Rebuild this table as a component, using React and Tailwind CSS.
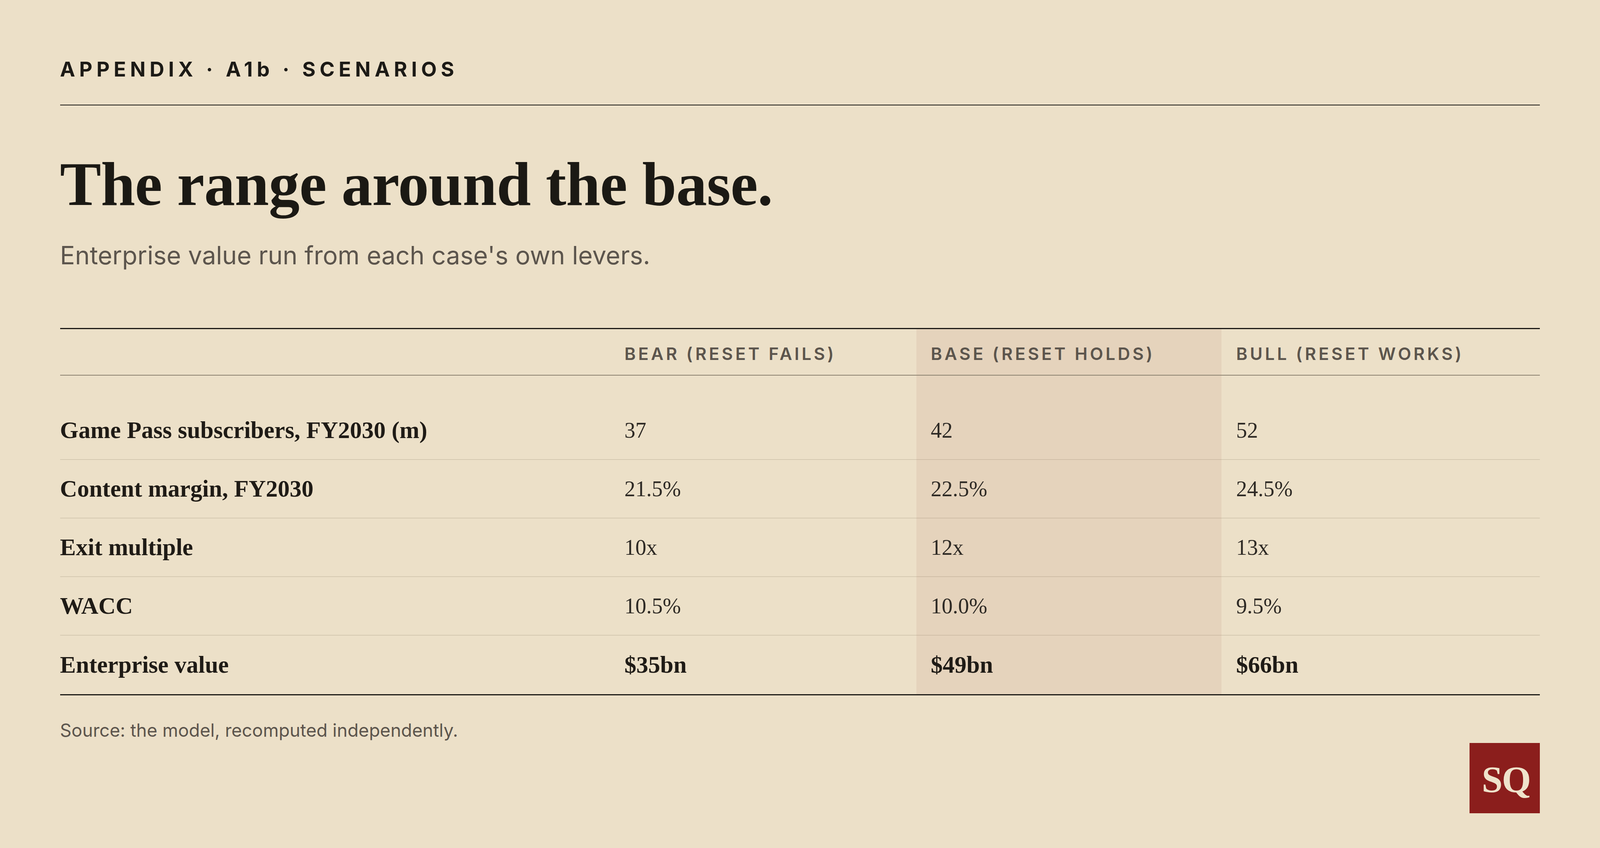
import React from "react";

const serif = "font-['Liberation_Serif','Times_New_Roman',serif]";
const sans = "font-['Inter','Liberation_Sans',sans-serif]";

const rows = [
  { label: "Game Pass subscribers, FY2030 (m)", v: ["37", "42", "52"] },
  { label: "Content margin, FY2030", v: ["21.5%", "22.5%", "24.5%"] },
  { label: "Exit multiple", v: ["10x", "12x", "13x"] },
  { label: "WACC", v: ["10.5%", "10.0%", "9.5%"] },
  { label: "Enterprise value", v: ["$35bn", "$49bn", "$66bn"], total: true },
];

const grid = "grid grid-cols-[1650fr_919fr_916fr_955fr]";

export default function App() {
  return (
    <div className="min-h-[2172px] w-full bg-[#ece0c8] px-[3.75vw] pt-[147px] text-[#1c1a16]">
      <div className={`${sans} border-b-2 border-[#1c1a16] pb-[59px] text-[52px] font-bold uppercase leading-[62px] tracking-[0.2em] text-[#1c1a16]`}>
        APPENDIX · A1<span className="normal-case">b</span> · SCENARIOS
      </div>

      <h1 className={`${serif} mt-[127px] text-[158px] font-bold leading-[150px] tracking-[-0.005em] text-[#1b1914]`}>
        The range around the base.
      </h1>

      <p className={`${sans} mt-[71px] text-[64px] leading-[72px] text-[#5c554d]`}>
        Enterprise value run from each case's own levers.
      </p>

      <div className="mt-[150px] border-t-[3px] border-[#1c1a16]">
        <div className={`${grid} h-[119px]`}>
          <div className="border-b-2 border-[#8c8270]" />
          {["BEAR (RESET FAILS)", "BASE (RESET HOLDS)", "BULL (RESET WORKS)"].map((h, i) => (
            <div
              key={h}
              className={`${sans} flex items-center whitespace-nowrap border-b-2 border-[#8c8270] pl-[37px] pt-[8px] text-[44px] font-semibold tracking-[0.14em] text-[#5c554d] ${i === 1 ? "bg-[#e5d3bc]" : ""}`}
            >
              {h}
            </div>
          ))}
        </div>
        <div className={`${grid} h-[66px]`}>
          <div />
          <div />
          <div className="bg-[#e5d3bc]" />
          <div />
        </div>
        {rows.map((r) => {
          const border = r.total
            ? "border-b-[3px] border-[#1c1a16] h-[153px]"
            : "border-b-2 border-[#5a4a30]/15 h-[150px]";
          return (
            <div key={r.label} className={grid}>
              <div className={`${serif} flex items-center whitespace-nowrap ${border} text-[61px] font-bold text-[#1f1b16]`}>
                {r.label}
              </div>
              {r.v.map((v, i) => (
                <div
                  key={i}
                  className={`${serif} flex items-center ${border} pl-[37px] ${r.total ? "text-[61px] font-bold text-[#1f1b16]" : "text-[56px] text-[#2e2a25]"} ${i === 1 ? "bg-[#e5d3bc]" : ""}`}
                >
                  {v}
                </div>
              ))}
            </div>
          );
        })}
      </div>

      <p className={`${sans} mt-[62px] text-[46px] leading-[54px] text-[#5c554d]`}>
        Source: the model, recomputed independently.
      </p>

      <div className="mt-[6px] flex justify-end">
        <div className={`${serif} flex h-[180px] w-[180px] items-center justify-center bg-[#8b1e1c] pt-[8px] pl-[6px] text-[96px] font-bold tracking-[-0.02em] text-[#efe3cb]`}>
          SQ
        </div>
      </div>
    </div>
  );
}
